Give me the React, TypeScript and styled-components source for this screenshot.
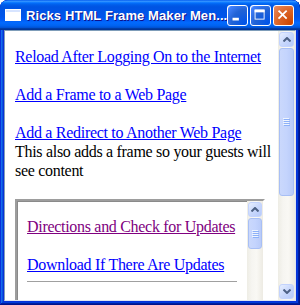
import React from 'react';
import styled, { createGlobalStyle } from 'styled-components';

const GlobalStyle = createGlobalStyle`
  html, body {
    margin: 0;
    padding: 0;
    background: #ffffff;
  }
  body {
    width: 300px;
    height: 305px;
    overflow: hidden;
  }
`;

const Window = styled.div`
  width: 300px;
  height: 305px;
  box-sizing: border-box;
  display: flex;
  flex-direction: column;
  background: #0831d9;
  border-radius: 8px 8px 0 0;
  overflow: hidden;
  box-shadow: inset -1px -1px #00138c, inset 1px 1px #0831d9,
    inset -2px -2px #001ea0, inset 2px 2px #166aee,
    inset -3px -3px #003bda, inset 3px 3px #0855dd;
`;

const TitleBar = styled.div`
  height: 30px;
  flex: none;
  display: flex;
  align-items: center;
  padding: 0 6px 0 5px;
  box-sizing: border-box;
  border-radius: 8px 8px 0 0;
  background: linear-gradient(
    to bottom,
    #0058ee 0%,
    #3593ff 4%,
    #288eff 6%,
    #127dff 8%,
    #036ffc 10%,
    #0262ee 14%,
    #0057e5 20%,
    #0054e3 24%,
    #0055eb 56%,
    #005bf5 66%,
    #026afe 76%,
    #0062ef 86%,
    #0052d6 92%,
    #0040ab 94%,
    #003092 100%
  );
`;

const TitleText = styled.div`
  flex: 1;
  margin-left: 5px;
  color: #ffffff;
  font-family: 'Liberation Sans', Arial, sans-serif;
  font-weight: 700;
  font-size: 13px;
  letter-spacing: 0.1px;
  white-space: nowrap;
  overflow: hidden;
  text-shadow: 1px 1px #0f1089;
`;

const Buttons = styled.div`
  display: flex;
  gap: 2px;
`;

const CaptionButton = styled.div<{ $close?: boolean }>`
  width: 21px;
  height: 21px;
  box-sizing: border-box;
  border: 1px solid #ffffff;
  border-radius: 3px;
  display: flex;
  align-items: center;
  justify-content: center;
  background: ${(p) =>
    p.$close
      ? 'radial-gradient(circle at 90% 90%, #cc4600 0%, #dc6527 55%, #e98d67 100%)'
      : 'radial-gradient(circle at 90% 90%, #0054e9 0%, #2263d5 55%, #4282ff 90%, #fff 100%)'};
`;

const Client = styled.div`
  flex: 1;
  min-height: 0;
  margin: 0 4px 4px;
  display: flex;
  border: 1px solid #7f9db9;
  border-right-color: #dfe5f0;
  border-bottom-color: #dfe5f0;
  background: #ffffff;
`;

const Page = styled.div`
  flex: 1;
  min-width: 0;
  overflow: hidden;
  padding: 16px 10px 0 10px;
  font-family: 'Liberation Serif', 'Times New Roman', serif;
  font-size: 16px;
  line-height: 19px;
  letter-spacing: -0.3px;
  white-space: nowrap;
  color: #000000;
`;

const Para = styled.p`
  margin: 0 0 19px;
`;

const Plain = styled.div``;

const Link = styled.a<{ $visited?: boolean }>`
  color: ${(p) => (p.$visited ? '#800080' : '#0000ff')};
  text-decoration: underline;
`;

const Frame = styled.div`
  width: 250px;
  height: 150px;
  box-sizing: border-box;
  display: flex;
  background: #ffffff;
  border: 2px solid;
  border-color: #9d9d9d #ffffff #ffffff #9d9d9d;
  box-shadow: inset 1px 1px #8a8a8a;
`;

const FramePage = styled.div`
  flex: 1;
  min-width: 0;
  padding: 16px 10px 0 10px;
`;

const Rule = styled.div`
  height: 0;
  border-top: 1px solid #a0a0a0;
  border-bottom: 1px solid #ffffff;
  margin-top: 7px;
`;

const ScrollBar = styled.div<{ $w: number }>`
  width: ${(p) => p.$w}px;
  flex: none;
  display: flex;
  flex-direction: column;
  background: linear-gradient(to right, #eeede5 0%, #f6f5f1 30%, #f9f8f4 60%, #edebe3 100%);
`;

const ArrowButton = styled.div<{ $h: number }>`
  height: ${(p) => p.$h}px;
  flex: none;
  margin: 1px;
  box-sizing: border-box;
  border: 1px solid #c3d3fd;
  border-radius: 3px;
  display: flex;
  align-items: center;
  justify-content: center;
  background: linear-gradient(135deg, #e7efff 0%, #c9d8fc 50%, #b6cafa 100%);
`;

const Thumb = styled.div<{ $h: number }>`
  height: ${(p) => p.$h}px;
  flex: none;
  margin: 0 1px;
  box-sizing: border-box;
  border: 1px solid #a8bff5;
  border-radius: 3px;
  display: flex;
  align-items: center;
  justify-content: center;
  background: linear-gradient(to right, #cad8fc 0%, #c4d4fd 50%, #b9cbf9 100%);
`;

const Track = styled.div`
  flex: 1;
`;

const Arrow = ({ up }: { up: boolean }) => (
  <svg width="8" height="5" viewBox="0 0 8 5">
    <path
      d={up ? 'M0.5 4.5 L4 1 L7.5 4.5' : 'M0.5 0.5 L4 4 L7.5 0.5'}
      fill="none"
      stroke="#4d6185"
      strokeWidth="2"
    />
  </svg>
);

const Grip = () => (
  <svg width="7" height="8" viewBox="0 0 7 8">
    {[0, 2, 4, 6].map((y) => (
      <g key={y}>
        <rect x="0" y={y} width="6" height="1" fill="#eef4fe" />
        <rect x="1" y={y + 1} width="6" height="1" fill="#8cb0f8" />
      </g>
    ))}
  </svg>
);

export default function App() {
  return (
    <>
      <GlobalStyle />
      <Window>
        <TitleBar>
          <svg width="16" height="12" viewBox="0 0 16 12">
            <rect x="0" y="0" width="16" height="12" fill="#ffffff" />
            <rect x="1" y="1" width="14" height="2" fill="#d7e4ff" />
          </svg>
          <TitleText>Ricks HTML Frame Maker Men...</TitleText>
          <Buttons>
            <CaptionButton>
              <svg width="21" height="21" viewBox="0 0 21 21">
                <rect x="5" y="13" width="7" height="3" fill="#ffffff" />
              </svg>
            </CaptionButton>
            <CaptionButton>
              <svg width="21" height="21" viewBox="0 0 21 21">
                <rect x="4.5" y="4.5" width="10" height="10" fill="none" stroke="#ffffff" strokeWidth="1" />
                <rect x="4" y="4" width="11" height="3" fill="#ffffff" />
              </svg>
            </CaptionButton>
            <CaptionButton $close>
              <svg width="21" height="21" viewBox="0 0 21 21">
                <path d="M5 5 L14 14 M14 5 L5 14" stroke="#ffffff" strokeWidth="2" />
              </svg>
            </CaptionButton>
          </Buttons>
        </TitleBar>
        <Client>
          <Page>
            <Para>
              <Link href="#">Reload After Logging On to the Internet</Link>
            </Para>
            <Para>
              <Link href="#">Add a Frame to a Web Page</Link>
            </Para>
            <Plain>
              <Link href="#">Add a Redirect to Another Web Page</Link>
            </Plain>
            <Para>
              This also adds a frame so your guests will
              <br />
              see content
            </Para>
            <Frame>
              <FramePage>
                <Para>
                  <Link href="#" $visited>
                    Directions and Check for Updates
                  </Link>
                </Para>
                <Plain>
                  <Link href="#">Download If There Are Updates</Link>
                </Plain>
                <Rule />
              </FramePage>
              <ScrollBar $w={16}>
                <ArrowButton $h={15}>
                  <Arrow up />
                </ArrowButton>
                <Thumb $h={31}>
                  <Grip />
                </Thumb>
                <Track />
              </ScrollBar>
            </Frame>
          </Page>
          <ScrollBar $w={17}>
            <ArrowButton $h={15}>
              <Arrow up />
            </ArrowButton>
            <Thumb $h={148}>
              <Grip />
            </Thumb>
            <Track />
            <ArrowButton $h={15}>
              <Arrow up={false} />
            </ArrowButton>
          </ScrollBar>
        </Client>
      </Window>
    </>
  );
}
